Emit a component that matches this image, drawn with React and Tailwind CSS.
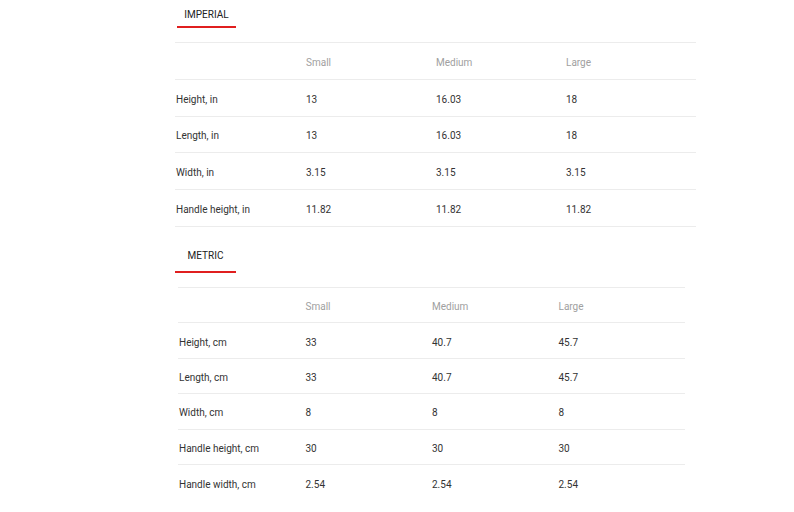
const imperial = {
  tab: 'IMPERIAL',
  rows: [
    ['Height, in', '13', '16.03', '18'],
    ['Length, in', '13', '16.03', '18'],
    ['Width, in', '3.15', '3.15', '3.15'],
    ['Handle height, in', '11.82', '11.82', '11.82'],
  ],
};

const metric = {
  tab: 'METRIC',
  rows: [
    ['Height, cm', '33', '40.7', '45.7'],
    ['Length, cm', '33', '40.7', '45.7'],
    ['Width, cm', '8', '8', '8'],
    ['Handle height, cm', '30', '30', '30'],
    ['Handle width, cm', '2.54', '2.54', '2.54'],
  ],
};

function SizeTable({ data, width, rowH, tabCls, tabPad, lastBorder }) {
  return (
    <section>
      <div className={`flex ${tabPad}`}>
        <div className={`${tabCls} border-b-2 border-[#e01f1f] text-center text-[10px] leading-[10px] text-[#222]`}>
          {data.tab}
        </div>
      </div>
      <div className={`${width} mt-[14px] border-t border-[#ececec]`}>
        <div className={`grid grid-cols-4 ${rowH} items-center border-b border-[#ececec] pt-[3px] pl-[1px] text-[10px] text-[#a0a0a0]`}>
          <div />
          <div>Small</div>
          <div>Medium</div>
          <div>Large</div>
        </div>
        {data.rows.map((r, i) => (
          <div
            key={r[0]}
            className={`grid grid-cols-4 ${rowH} items-center pt-[3px] pl-[1px] text-[10px] text-[#333] ${
              i < data.rows.length - 1 || lastBorder ? 'border-b border-[#ececec]' : ''
            }`}
          >
            {r.map((c, j) => (
              <div key={j}>{c}</div>
            ))}
          </div>
        ))}
      </div>
    </section>
  );
}

export default function App() {
  return (
    <div className="h-[512px] w-[794px] overflow-hidden bg-white font-['Roboto',sans-serif]">
      <div className="ml-[175px]">
        <SizeTable
          data={imperial}
          width="w-[521px]"
          rowH="h-[36.8px]"
          tabCls="w-[59px] pt-[10px] pb-[6px]"
          tabPad="pl-[2px]"
          lastBorder
        />
      </div>
      <div className="ml-[178px] mt-[14px]">
        <SizeTable
          data={metric}
          width="w-[507px]"
          rowH="h-[35.4px]"
          tabCls="w-[61px] pt-[10px] pb-[10px]"
          tabPad="-ml-[3px]"
          lastBorder={false}
        />
      </div>
    </div>
  );
}
